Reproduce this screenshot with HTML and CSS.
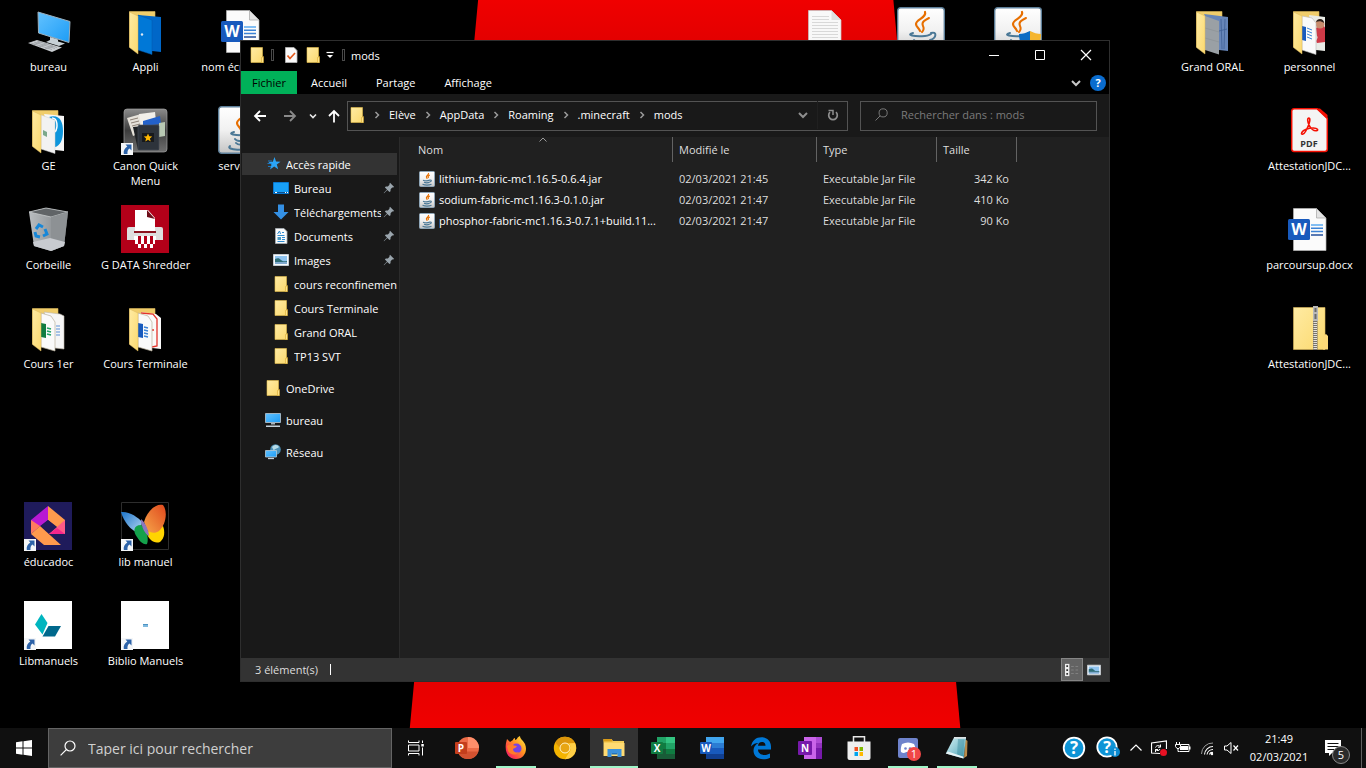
FILE: index.html
```html
<!DOCTYPE html>
<html lang="fr">
<head>
    <meta charset="UTF-8">
    <meta name="viewport" content="width=device-width, initial-scale=1.0">
    <title>mods</title>
    <link rel="stylesheet" href="styles.css">
</head>
<body>

    <!-- Icônes partagées -->
    <svg class="defs" aria-hidden="true">
        <defs>
            <linearGradient id="gFolder" x1="0" y1="0" x2="1" y2="1">
                <stop offset="0" stop-color="#ffeba3"/><stop offset="1" stop-color="#fbd96f"/>
            </linearGradient>
            <linearGradient id="gScreen" x1="0" y1="0" x2="1" y2="1">
                <stop offset="0" stop-color="#63c2ff"/><stop offset="1" stop-color="#1c9cf6"/>
            </linearGradient>
            <linearGradient id="gJar" x1="0" y1="0" x2="0" y2="1">
                <stop offset="0" stop-color="#ffffff"/><stop offset=".5" stop-color="#f1f1f1"/><stop offset="1" stop-color="#c4c4c4"/>
            </linearGradient>
            <linearGradient id="gBin" x1="0" y1="0" x2="1" y2="0">
                <stop offset="0" stop-color="#b9bdc0"/><stop offset=".5" stop-color="#9a9ea1"/><stop offset="1" stop-color="#74787b"/>
            </linearGradient>
            <linearGradient id="gCanon" x1="0" y1="0" x2="0" y2="1">
                <stop offset="0" stop-color="#8b8b8b"/><stop offset=".5" stop-color="#3d3d3d"/><stop offset="1" stop-color="#6f6f6f"/>
            </linearGradient>
            <linearGradient id="gFox" x1="1" y1="0" x2="0" y2="1">
                <stop offset="0" stop-color="#fff04a"/><stop offset=".4" stop-color="#ff9a1f"/><stop offset=".75" stop-color="#ff3b4b"/><stop offset="1" stop-color="#e3157a"/>
            </linearGradient>
            <linearGradient id="gPad" x1="0" y1="0" x2="1" y2="1">
                <stop offset="0" stop-color="#d8f2f6"/><stop offset="1" stop-color="#4aa3b5"/>
            </linearGradient>
            <linearGradient id="gOrange" x1="0" y1="1" x2="1" y2="0">
                <stop offset="0" stop-color="#f6a64a"/><stop offset="1" stop-color="#e0481d"/>
            </linearGradient>
            <linearGradient id="gWing" x1="0" y1="0" x2="1" y2="1">
                <stop offset="0" stop-color="#1b74c9"/><stop offset="1" stop-color="#b9d9f4"/>
            </linearGradient>
        </defs>

        <symbol id="folder" viewBox="0 0 16 16">
            <path d="M2 .5h11.500v15H2z" fill="url(#gFolder)" stroke="#e6bf4e" stroke-width=".6"/>
            <path d="M12.500 10.500l2-1v6.200h-2z" fill="#fde28b" stroke="#d9a92b" stroke-width=".6"/>
        </symbol>
        <symbol id="folder-back" viewBox="0 0 48 48">
            <path d="M8.500 4.500H34V40H8.500z" fill="#f0cd6b" stroke="#dcb95c" stroke-width=".6"/>
        </symbol>
        <symbol id="folder-front" viewBox="0 0 48 48">
            <path d="M8.500 5l8.500 4v38l-8.500-6.500z" fill="url(#gFolder)" stroke="#dcb95c" stroke-width=".5"/>
        </symbol>
        <symbol id="shortcut" viewBox="0 0 12 12">
            <path d="M0 0h12v12H0z" fill="#f4f6f8"/>
            <path d="M4.500 1.500H10.500V7.500L8.600 5.600C7 6.500 6.200 8 6.500 11H2.800C2.300 8 3.500 5 6.300 3.400z" fill="#2c62a8"/>
        </symbol>
        <symbol id="jar" viewBox="0 0 48 48">
            <rect x=".7" y=".7" width="46.600" height="46.600" rx="3" fill="url(#gJar)" stroke="#5d7f99" stroke-width="1.400"/>
            <g fill="none" stroke-linecap="round">
                <path d="M28 5c2 6-9 7-9 12 0 3 3 4 4 7" stroke="#e76f00" stroke-width="2.200"/>
                <path d="M32 11c-4 2-8 4-6 8 1 2 1 4-1 6" stroke="#e76f00" stroke-width="2"/>
                <path d="M16 26c-8 2 2 3.500 9 3.200 6-.2 8-1.500 9-2.200" stroke="#4b7896" stroke-width="2"/>
                <path d="M34 26c6-2 6 5-1 7" stroke="#4b7896" stroke-width="2"/>
                <path d="M17 33c2 3 11 2.500 14 1M18 37c2 2.500 8 2 11 1M12 40c-5 4 16 5.500 25 1" stroke="#4b7896" stroke-width="2"/>
            </g>
        </symbol>
        <symbol id="jar-small" viewBox="0 0 16 16">
            <rect x=".5" y=".5" width="15" height="15" rx="1" fill="url(#gJar)" stroke="#8fa6b8"/>
            <path d="M9.500 2c.8 2-3 2.500-2 4.500l.8 1.300M10.800 4c-1.300.7-2.300 1.300-1.300 3" fill="none" stroke="#e76f00" stroke-width="1.200"/>
            <path d="M4 9.200c2 .8 5 .8 7-.2 2-.2 1.500 1.700-.5 2M5 11.300c2 .7 4 .6 5.500 0M3.500 13.300c2.500.9 6.500.9 9 0" fill="none" stroke="#4b7896" stroke-width="1.200"/>
        </symbol>
        <symbol id="docx" viewBox="0 0 48 48">
            <path d="M8.500 3.500h23l9.500 9.500v32.500H8.500z" fill="#fbfbfb" stroke="#b5b5b5" stroke-width=".7"/>
            <path d="M31.500 3.500v9.500H41z" fill="#e4e4e4" stroke="#a5a5a5" stroke-width=".7"/>
            <path d="M26 20h12" stroke="#5aaaf0" stroke-width="1.500"/><path d="M26 23.300h12M26 26.600h12" stroke="#3c83d6" stroke-width="1.500"/><path d="M26 30h12" stroke="#234f9c" stroke-width="1.500"/>
            <rect x="3" y="14" width="22" height="21" rx="1.500" fill="#185abd"/>
            <text x="14" y="30" class="glyph" font-size="16" fill="#fff">W</text>
        </symbol>
        <symbol id="sheet" viewBox="0 0 48 48">
            <path d="M8.500 3.500h23l9.500 9.500v32.500H8.500z" fill="#f8f8f8" stroke="#c5c5c5" stroke-width=".7"/>
            <path d="M31.500 3.500v9.500H41z" fill="#dedede"/>
            <path d="M12 9.500h17M12 12.500h17M12 15.500h26M12 18.500h26M12 21.500h26M12 24.500h26M12 27.500h26M12 30.500h26M12 33.500h26M12 36.500h26" stroke="#cfcfcf" stroke-width=".8"/>
        </symbol>
        <symbol id="pc" viewBox="0 0 16 16">
            <path d="M.5 1.500h15v9H.5z" fill="url(#gScreen)" stroke="#9fb4c2"/>
            <path d="M6 11h4v1.500H6z" fill="#a9b5bd"/><path d="M1 13.500h14v1.500H1z" fill="#c6d2da"/>
        </symbol>
        <symbol id="picture" viewBox="0 0 16 16">
            <path d="M.5 2.500h15v11H.5z" fill="#f7f9fb" stroke="#c3cad0"/>
            <path d="M2 4h12v8H2z" fill="#8fc3ef"/><path d="M2 7c3-1 4-1 6 1s4 1 6 1v1.500H2z" fill="#2f6e77"/><path d="M2 10h12v2H2z" fill="#7fa9cf"/>
        </symbol>
        <symbol id="pin" viewBox="0 0 12 12">
            <path d="M7 .8l4.200 4.200-1.200.6-.8-.1-1.600 1.700-.1 2-1 .9-2.200-2.200L1 11.300l-.3-.3L4 7.600 1.900 5.500l.9-1 2-.1L6.500 2.800 6.400 2z" fill="#9aa5ad"/>
        </symbol>
        <symbol id="lens" viewBox="0 0 16 16">
            <circle cx="10" cy="6" r="5" fill="none" stroke="currentColor" stroke-width="1.200"/>
            <path d="M6.300 9.700L.6 15.400" stroke="currentColor" stroke-width="1.200"/>
        </symbol>
        <symbol id="chevron" viewBox="0 0 6 8">
            <path d="M1.500 1l3 3-3 3" fill="none" stroke="currentColor" stroke-width="1.500"/>
        </symbol>
        <symbol id="down" viewBox="0 0 12 8">
            <path d="M2 2l4 4 4-4" fill="none" stroke="currentColor" stroke-width="2"/>
        </symbol>
    </svg>

    <main class="desktop">
        <div class="wallpaper"></div>

        <a class="icon c1 r1" href="#">
            <svg viewBox="0 0 48 48">
                <path d="M14 5l32 9.500-1 21L14.500 26z" fill="url(#gScreen)" stroke="#9db0bd" stroke-width="1"/>
                <path d="M26 30l8 2.500v2l7 2-6 2.500-13-4 4-2z" fill="#c7d0d6"/>
                <path d="M4 36l9-3 25 7.500-10 4.500z" fill="#c9cdd1"/>
                <path d="M7 36l21 6.500M10 35l21 6.500M13 34l20 6.500M9 38l8-3.500M15 40l8-3.500M21 42l8-3" stroke="#8b9196" stroke-width=".6"/>
            </svg>
            <span>bureau</span>
        </a>
        <a class="icon c2 r1" href="#">
            <svg viewBox="0 0 48 48">
                <use href="#folder-back"/>
                <path d="M17 8l23 2v35l-9-1z" fill="#0067c8"/>
                <path d="M17 8l14 5v34.500L17 43z" fill="#0078d7" stroke="#0058ad" stroke-width=".5"/>
                <circle cx="21" cy="27.500" r="1.200" fill="#dfe9f2"/>
                <use href="#folder-front"/>
            </svg>
            <span>Appli</span>
        </a>
        <a class="icon c3 r1" href="#">
            <svg><use href="#docx"/></svg>
            <span>nom écran.docx</span>
        </a>
        <a class="icon c9 r1" href="#" aria-label="Document texte"><svg><use href="#sheet"/></svg></a>
        <a class="icon c10 r1" href="#" aria-label="Fichier jar"><svg><use href="#jar"/></svg></a>
        <a class="icon c11 r1" href="#" aria-label="Installateur jar">
            <svg viewBox="0 0 48 48">
                <use href="#jar"/>
                <path d="M25 27c4 0 7-1 11-3v20c-8-3-11-9-11-17z" fill="#0b6cc4"/>
                <path d="M47 27c-4 0-7-1-11-3v20c8-3 11-9 11-17z" fill="#f5b52e"/>
            </svg>
        </a>
        <a class="icon c13 r1" href="#">
            <svg viewBox="0 0 48 48">
                <use href="#folder-back"/>
                <path d="M16 7l24 3v34l-9-1z" fill="#6685b8"/>
                <path d="M33 12l1 30M37 12l-1 30M31 24l8-2" stroke="#3f5f94" stroke-width=".8"/>
                <path d="M17 9l14 5v33.500L17 43z" fill="#9aa0a5"/>
                <path d="M17 21l14 4M17 31l14 4" stroke="#8c9297" stroke-width=".7"/>
                <use href="#folder-front"/>
            </svg>
            <span>Grand ORAL</span>
        </a>
        <a class="icon c14 r1" href="#">
            <svg viewBox="0 0 48 48">
                <use href="#folder-back"/>
                <path d="M24 8l16 2v34l-9-1z" fill="#e9ebe6"/>
                <path d="M31 21c3-3 9-3 9 0v14l-8 1c-2-3 2-5 0-7z" fill="#cf3a47"/>
                <circle cx="35" cy="17" r="4.500" fill="#c98d6e"/><path d="M31 15c1-4 8-4 8 1-3-2-5-2-8-1z" fill="#2b211d"/>
                <path d="M17 9l10 2 4 5v31.500L17 43z" fill="#fafafa" stroke="#b9b9b9" stroke-width=".6"/>
                <path d="M17 19l4 1v14l-4-1z" fill="#185abd"/><path d="M22 21l5 2M22 24l5 2M22 27l5 2M22 30l5 2" stroke="#3c83d6"/>
                <use href="#folder-front"/>
            </svg>
            <span>personnel</span>
        </a>

        <a class="icon c1 r2" href="#">
            <svg viewBox="0 0 48 48">
                <use href="#folder-back"/>
                <path d="M20 8l20 2v35l-9-1z" fill="#f6f6f6"/>
                <path d="M25 11c11-3 14 5 14 14s-3 15-8 16V15z" fill="#0d95dc"/>
                <path d="M28 12c6 0 6 10 3 14" fill="none" stroke="#fff" stroke-width="1.500"/>
                <path d="M17 9l14 5v33.500L17 43z" fill="#f2f2f2" stroke="#cfcfcf" stroke-width=".5"/>
                <path d="M19 24l4 2v5l-4-2z" fill="#7ca88c"/>
                <use href="#folder-front"/>
            </svg>
            <span>GE</span>
        </a>
        <a class="icon c2 r2" href="#">
            <svg viewBox="0 0 48 48">
                <rect x="3" y="3" width="43" height="43" rx="3" fill="url(#gCanon)" stroke="#a2a2a2" stroke-width=".7"/>
                <path d="M6 12l14-4 4 17-12 5z" fill="#e6e2da"/><path d="M9 14l8-2M10 17l8-2M11 20l8-2" stroke="#8d8176"/>
                <path d="M18 8l16-2 1 9-15 4z" fill="#f1efe9"/><path d="M22 15l17-5 1 8-18 2z" fill="#2361c9"/>
                <path d="M38 17l6-1v14l-6 1z" fill="#b9c9b4"/>
                <path d="M12 21l22-2 4 2v23H17z" fill="#1e2124"/>
                <rect x="17" y="19" width="21" height="25" rx="1.500" fill="#2d333b" stroke="#4b525c" stroke-width=".6"/>
                <path d="M21 27h12v9H21z" fill="#17191c"/>
                <path d="M27 27.500l1.200 2.800 3 .2-2.300 2 .8 3-2.700-1.700-2.700 1.700.8-3-2.300-2 3-.2z" fill="#ffb800"/>
                <use href="#shortcut" x="0" y="37" width="12" height="12"/>
            </svg>
            <span>Canon Quick Menu</span>
        </a>
        <a class="icon c3 r2" href="#">
            <svg><use href="#jar"/></svg>
            <span>server.jar</span>
        </a>
        <a class="icon c14 r2" href="#">
            <svg viewBox="0 0 48 48">
                <path d="M9 2.700h23l10.300 9.800V43a2.500 2.500 0 0 1-2.500 2.500H9A2.500 2.500 0 0 1 6.700 43V5.200A2.500 2.500 0 0 1 9 2.700z" fill="#f4f4f4" stroke="#f40f02" stroke-width="1.500"/>
                <path d="M31.500 2.500L42.500 13V9L35 2.500z" fill="#f40f02"/>
                <path d="M24 12c-2 0-1.500 4 .3 7.500 1.700 3.300 4 5.500 7 5.300 2.500-.3 1.500-2.800-3-2.800-5 0-10 2-11.500 4.500-1.300 2.500 2 2.500 4-1.500 2-3.800 4.500-9 4-12-.2-.8-.4-1-.8-1z" fill="none" stroke="#f40f02" stroke-width="1.600"/>
                <text x="24" y="41" class="glyph" font-size="9" fill="#333">PDF</text>
            </svg>
            <span>AttestationJDC...</span>
        </a>

        <a class="icon c1 r3" href="#">
            <svg viewBox="0 0 48 48">
                <path d="M5 7l17-4 22 4-4 34-13 5-17-5z" fill="url(#gBin)"/>
                <path d="M5 7l17-4 22 4-17 5z" fill="#606467" stroke="#c6cacc" stroke-width=".8"/>
                <path d="M27 12l17-5-4 34-13 5z" fill="#8d9194"/>
                <path d="M9 37l17-4 15 4-1 4-13 5-17-5z" fill="#c8cbd0"/>
                <g fill="none" stroke="#1787d8" stroke-width="3"><path d="M12 24l3-4 4 2"/><path d="M21 24l2 5-4 2"/><path d="M16 32l-4-1-1-4"/></g>
            </svg>
            <span>Corbeille</span>
        </a>
        <a class="icon c2 r3" href="#">
            <svg viewBox="0 0 48 48">
                <path d="M0 0h48v48H0z" fill="#b30019"/>
                <path d="M8 22h32a2 2 0 0 1 2 2v11H6V24a2 2 0 0 1 2-2z" fill="#dedede"/>
                <path d="M14 5h13l7 8v13H14z" fill="#fff"/><path d="M26 5l8 9-8-2z" fill="#6d0d18"/>
                <path d="M13 26h22v2H13z" fill="#8c1420"/>
                <path d="M13 31h22v4H13z" fill="#fff"/>
                <path d="M17 31h3v4h-3zM23 31h3v4h-3zM29 31h3v4h-3z" fill="#b30019"/>
                <path d="M14 35h3v4h-3zM20 35h3v4h-3zM26 35h3v4h-3zM32 35h2v4h-2zM17 39h3v4h-3zM23 39h3v4h-3zM29 39h3v4h-3z" fill="#fff"/>
            </svg>
            <span>G DATA Shredder</span>
        </a>
        <a class="icon c14 r3" href="#">
            <svg><use href="#docx"/></svg>
            <span>parcoursup.docx</span>
        </a>

        <a class="icon c1 r4" href="#">
            <svg viewBox="0 0 48 48">
                <use href="#folder-back"/>
                <path d="M20 8l16 2 4 2v33l-9-1z" fill="#f6f6f6" stroke="#bdb7aa" stroke-width=".6"/>
                <path d="M32 22h4M32 25h4M32 28h4M32 31h4" stroke="#5b8fd6"/>
                <path d="M17 9l10 3 4 6v29L17 43z" fill="#fafafa" stroke="#b9b09c" stroke-width=".7"/>
                <path d="M17 19l5 1v14l-5-1z" fill="#107c41"/><path d="M23 24l4 1M23 27l4 1M23 30l4 1" stroke="#21a366" stroke-width="1.700"/>
                <use href="#folder-front"/>
            </svg>
            <span>Cours 1er</span>
        </a>
        <a class="icon c2 r4" href="#">
            <svg viewBox="0 0 48 48">
                <use href="#folder-back"/>
                <path d="M20 8l15 2 5 4v31l-9-1z" fill="#fafafa"/>
                <path d="M20 9l12 1 4 5v27l-5 1" fill="none" stroke="#e3342b" stroke-width="1.300"/>
                <circle cx="32" cy="26" r="1" fill="#e3342b"/>
                <path d="M17 9l10 3 4 6v29L17 43z" fill="#fafafa" stroke="#b9b09c" stroke-width=".7"/>
                <path d="M17 19l5 1v14l-5-1z" fill="#185abd"/><path d="M23 23l4 1M23 26l4 1M23 29l4 1M23 32l4 1" stroke="#3c83d6" stroke-width="1.400"/>
                <use href="#folder-front"/>
            </svg>
            <span>Cours Terminale</span>
        </a>
        <a class="icon c14 r4" href="#">
            <svg viewBox="0 0 48 48">
                <path d="M8.500 3.500H40V45.500H8.500z" fill="url(#gFolder)" stroke="#dcb95c" stroke-width=".6"/>
                <path d="M38 32l3-2 2 2v13.500h-5z" fill="#fcd978"/>
                <path d="M28 3h4.500v43H28z" fill="#77736a"/><path d="M30.200 18v28" stroke="#e6e3da" stroke-width="3.600" stroke-dasharray="1 1"/>
                <path d="M28 2h5v15h-5z" fill="#b9b9b9"/><path d="M29.500 4h2v4h-2zM29.500 10h2v5h-2z" fill="#6a6a6a"/>
            </svg>
            <span>AttestationJDC...</span>
        </a>

        <a class="icon c1 r6" href="#">
            <svg viewBox="0 0 48 48">
                <path d="M0 0h48v48H0z" fill="#1f1b5b"/>
                <path d="M24 4v14L7 31V18z" fill="#b819d3"/><path d="M24 4l17 14v13L24 18z" fill="#ff9a4d"/>
                <path d="M7 18l9 6-9 8z" fill="#ff7a5f"/><path d="M41 18v14H25z" fill="#ff5b87"/><path d="M25 32l8-6 8 6z" fill="#f5268b"/>
                <path d="M7 32l9-8 21 19H20z" fill="#ff9a4d"/><path d="M24 18l7 6-7 6-7-6z" fill="#1f1b5b"/>
                <use href="#shortcut" x="0" y="37" width="12" height="12"/>
            </svg>
            <span>éducadoc</span>
        </a>
        <a class="icon c2 r6" href="#">
            <svg viewBox="0 0 48 48">
                <path d="M.5 .5h47v47H.5z" fill="#000" stroke="#2d2d2d"/>
                <path d="M0 10c8-1 17 5 21 10l-2 12C9 28 3 20 0 10z" fill="url(#gWing)"/>
                <path d="M20 23c-8 0-8 7-4 12 3 5 7 8 10 7 2-5 0-14-6-19z" fill="#14a14b"/>
                <path d="M25 30c3 8 8 12 14 10 5-4 5-11 3-16z" fill="#ffd400"/>
                <path d="M23 20C26 9 35 1 42 3c5 6 3 20-4 26-4 3-9 2-12-1z" fill="url(#gOrange)"/>
                <path d="M20 17c4 3 8 12 8 17-4-2-8-9-8-17z" fill="#8d77c0"/>
                <use href="#shortcut" x="0" y="37" width="12" height="12"/>
            </svg>
            <span>lib manuel</span>
        </a>
        <a class="icon c1 r7" href="#">
            <svg viewBox="0 0 48 48">
                <path d="M0 0h48v48H0z" fill="#fff"/>
                <path d="M17.500 13l6 9-5 11.500-7.500-10z" fill="#00b5bf"/><path d="M24.500 25H37l-6 10.500H18.500z" fill="#00688c"/>
                <use href="#shortcut" x="0" y="37" width="12" height="12"/>
            </svg>
            <span>Libmanuels</span>
        </a>
        <a class="icon c2 r7" href="#">
            <svg viewBox="0 0 48 48">
                <path d="M0 0h48v48H0z" fill="#fff"/>
                <path d="M22 23h5v3h-5z" fill="#7fb9de"/><path d="M22 23h5v1h-5z" fill="#4d94c4"/>
                <use href="#shortcut" x="0" y="37" width="12" height="12"/>
            </svg>
            <span>Biblio Manuels</span>
        </a>

        <!-- Fenêtre de l'explorateur -->
        <section class="window">
            <header class="titlebar">
                <svg class="ico16"><use href="#folder"/></svg>
                <span class="sep"></span>
                <button class="quick" aria-label="Propriétés">
                    <svg viewBox="0 0 16 16"><path d="M2.500 .5h8.500l3 3v12H2.500z" fill="#fafafa" stroke="#b8b8b8" stroke-width=".8"/><path d="M4.500 8.500l2.500 3 5-5.500" fill="none" stroke="#e3591c" stroke-width="1.700"/></svg>
                </button>
                <button class="quick" aria-label="Nouveau dossier"><svg><use href="#folder"/></svg></button>
                <button class="quick-more" aria-label="Personnaliser">
                    <svg viewBox="0 0 8 8"><path d="M.5 1.500h7" stroke="#fff" stroke-width="1.200"/><path d="M1 4h6L4 7z" fill="#fff"/></svg>
                </button>
                <span class="sep"></span>
                <h1>mods</h1>
                <div class="win-buttons">
                    <button aria-label="Réduire"><svg viewBox="0 0 12 12"><path d="M1 6.500h10" stroke="#fff"/></svg></button>
                    <button aria-label="Agrandir"><svg viewBox="0 0 12 12"><path d="M1.500 1.500h9v9h-9z" fill="none" stroke="#fff"/></svg></button>
                    <button aria-label="Fermer"><svg viewBox="0 0 12 12"><path d="M1 1l10 10M11 1L1 11" stroke="#fff" stroke-width="1.200"/></svg></button>
                </div>
            </header>

            <nav class="tabs">
                <button class="file">Fichier</button>
                <button>Accueil</button>
                <button>Partage</button>
                <button>Affichage</button>
                <div class="ribbon-tools">
                    <button aria-label="Développer le ruban"><svg class="arrow-down"><use href="#down"/></svg></button>
                    <button aria-label="Aide"><svg viewBox="0 0 16 16"><circle cx="8" cy="8" r="8" fill="#0a6cce"/><text x="8" y="12" class="glyph" font-size="11" fill="#fff">?</text></svg></button>
                </div>
            </nav>

            <div class="toolbar">
                <button class="nav-btn" aria-label="Précédent"><svg viewBox="0 0 14 14"><path d="M13 7H2M7 2L2 7l5 5" fill="none" stroke="#fff" stroke-width="1.800"/></svg></button>
                <button class="nav-btn" aria-label="Suivant"><svg viewBox="0 0 14 14"><path d="M1 7h11M7 2l5 5-5 5" fill="none" stroke="#8a8a8a" stroke-width="1.800"/></svg></button>
                <button class="nav-small" aria-label="Emplacements récents"><svg viewBox="0 0 8 8"><path d="M1 2.500l3 3 3-3" fill="none" stroke="#e8e8e8" stroke-width="1.600"/></svg></button>
                <button class="nav-btn nav-up" aria-label="Dossier parent"><svg viewBox="0 0 14 14"><path d="M7 13.500V2M2 7l5-5 5 5" fill="none" stroke="#fff" stroke-width="1.800"/></svg></button>
                <div class="address">
                    <svg class="ico16"><use href="#folder"/></svg>
                    <svg class="crumb-sep"><use href="#chevron"/></svg><a href="#">Elève</a>
                    <svg class="crumb-sep"><use href="#chevron"/></svg><a href="#">AppData</a>
                    <svg class="crumb-sep"><use href="#chevron"/></svg><a href="#">Roaming</a>
                    <svg class="crumb-sep"><use href="#chevron"/></svg><a href="#">.minecraft</a>
                    <svg class="crumb-sep"><use href="#chevron"/></svg><a href="#">mods</a>
                    <button class="history" aria-label="Historique"><svg class="arrow-down"><use href="#down"/></svg></button>
                    <button class="refresh" aria-label="Actualiser">
                        <svg viewBox="0 0 12 12"><path d="M3 3.200A4.300 4.300 0 1 0 9 3.200" fill="none" stroke="#8f8f8f" stroke-width="1.700"/><path d="M1.500 1.500h4.500v4.500" fill="none" stroke="#8f8f8f" stroke-width="1.500"/></svg>
                    </button>
                </div>
                <label class="search">
                    <svg><use href="#lens"/></svg>
                    <input type="text" placeholder="Rechercher dans : mods" aria-label="Rechercher dans : mods">
                </label>
            </div>

            <div class="body">
                <aside class="sidebar">
                    <ul>
                        <li class="top selected"><a href="#"><svg viewBox="0 0 16 16"><path d="M9.500 1l1.500 4.500 4.500.2-3.700 2.900 1.400 4.700-4-2.700L5 13.500l1.500-4.700L3.500 6l4.300-.3z" fill="#2ba5f7"/><path d="M3 5h4M2.500 7.500h4M3 10.500h3" stroke="#1a7fd0" stroke-width=".9"/></svg><span>Accès rapide</span></a></li>
                        <li><a href="#"><svg viewBox="0 0 16 16"><path d="M.5 2.500h15v11H.5z" fill="#18a0f8" stroke="#0a78d0"/><path d="M1 12.500h14" stroke="#0b4f8e"/><path d="M2 12.500h2M12 12.500h1M14 12.500h1" stroke="#fff"/></svg><span>Bureau</span><svg class="pin"><use href="#pin"/></svg></a></li>
                        <li><a href="#"><svg viewBox="0 0 16 16"><path d="M5 .5h6v7.500h4.500L8 15.500.5 8H5z" fill="#3490e4"/></svg><span>Téléchargements</span><svg class="pin"><use href="#pin"/></svg></a></li>
                        <li><a href="#"><svg viewBox="0 0 16 16"><path d="M2.500 .5h8.500l3 3v12H2.500z" fill="#fafafa" stroke="#a8b0b6" stroke-width=".8"/><path d="M4.500 6l2-3 1 3M9 4.500h2M4.500 7.500h7M9 9.500h3M9 11.500h3M4.500 13.500h7" fill="none" stroke="#2f8bd0"/><path d="M4.500 9h3.500v3H4.500z" fill="#4c9ac2"/></svg><span>Documents</span><svg class="pin"><use href="#pin"/></svg></a></li>
                        <li><a href="#"><svg><use href="#picture"/></svg><span>Images</span><svg class="pin"><use href="#pin"/></svg></a></li>
                        <li><a href="#"><svg><use href="#folder"/></svg><span>cours reconfinement</span></a></li>
                        <li><a href="#"><svg><use href="#folder"/></svg><span>Cours Terminale</span></a></li>
                        <li><a href="#"><svg><use href="#folder"/></svg><span>Grand ORAL</span></a></li>
                        <li><a href="#"><svg><use href="#folder"/></svg><span>TP13 SVT</span></a></li>
                        <li class="top gap"><a href="#"><svg><use href="#folder"/></svg><span>OneDrive</span></a></li>
                        <li class="top gap"><a href="#"><svg><use href="#pc"/></svg><span>bureau</span></a></li>
                        <li class="top gap"><a href="#"><svg viewBox="0 0 16 16"><circle cx="10.500" cy="5.500" r="5.300" fill="#4b8fb5"/><path d="M7 3c3-3 6-2 7 0-1 2-5 1-5 4z" fill="#b5dbe8"/><path d="M.5 6.500h11v6.500H.5z" fill="url(#gScreen)" stroke="#b8cad6" stroke-width=".8"/><path d="M3 14.500h6" stroke="#c6d2da" stroke-width="1.300"/></svg><span>Réseau</span></a></li>
                    </ul>
                </aside>

                <div class="files">
                    <svg class="sort" viewBox="0 0 8 5"><path d="M.5 4.500L4 1l3.500 3.500" fill="none" stroke="#9a9a9a"/></svg>
                    <table>
                        <colgroup><col class="col-name"><col class="col-date"><col class="col-type"><col class="col-size"><col></colgroup>
                        <thead>
                            <tr><th>Nom</th><th>Modifié le</th><th>Type</th><th>Taille</th><th class="rest"></th></tr>
                        </thead>
                        <tbody>
                            <tr><td><a href="#"><svg><use href="#jar-small"/></svg><span>lithium-fabric-mc1.16.5-0.6.4.jar</span></a></td><td>02/03/2021 21:45</td><td>Executable Jar File</td><td>342 Ko</td><td></td></tr>
                            <tr><td><a href="#"><svg><use href="#jar-small"/></svg><span>sodium-fabric-mc1.16.3-0.1.0.jar</span></a></td><td>02/03/2021 21:47</td><td>Executable Jar File</td><td>410 Ko</td><td></td></tr>
                            <tr><td><a href="#"><svg><use href="#jar-small"/></svg><span>phosphor-fabric-mc1.16.3-0.7.1+build.11...</span></a></td><td>02/03/2021 21:47</td><td>Executable Jar File</td><td>90 Ko</td><td></td></tr>
                        </tbody>
                    </table>
                </div>
            </div>

            <footer class="status">
                <span>3 élément(s)</span>
                <span class="caret"></span>
                <div class="views">
                    <button class="on" aria-label="Détails">
                        <svg viewBox="0 0 16 14"><path d="M0 0h5v14H0z" fill="#eee"/><path d="M1.500 1.500h2v2h-2zM1.500 6h2v2h-2zM1.500 10.500h2v2h-2z" fill="#333"/><path d="M7 3h3M12 3h3M7 7h3M12 7h3M7 11h3M12 11h3" stroke="#858585"/></svg>
                    </button>
                    <button aria-label="Grandes icônes"><svg viewBox="0 0 16 16"><use href="#picture"/></svg></button>
                </div>
            </footer>
        </section>
    </main>

    <footer class="taskbar">
        <button class="start" aria-label="Démarrer">
            <svg viewBox="0 0 16 16"><path d="M0 2.200l6.500-.9v6.200H0zM7.500 1.200L16 0v7.500H7.500zM0 8.500h6.500v6.200L0 13.800zM7.500 8.500H16V16l-8.500-1.200z" fill="#fff"/></svg>
        </button>
        <label class="task-search">
            <svg><use href="#lens"/></svg>
            <input type="text" placeholder="Taper ici pour rechercher" aria-label="Taper ici pour rechercher">
        </label>
        <button class="taskview" aria-label="Affichage des tâches">
            <svg viewBox="0 0 16 16"><path d="M.5 5h10.500v6H.5zM.5 .5v2H11V.5M.5 15.500v-2H11v2M14.500 .5v2.500M14.500 7.500v8" fill="none" stroke="#fff"/><path d="M13.300 4h2.500v2.500h-2.500z" fill="#fff"/></svg>
        </button>
        <div class="apps">
            <button aria-label="PowerPoint">
                <svg viewBox="0 0 24 24"><circle cx="13" cy="12" r="11" fill="#ed6c47"/><path d="M13 1a11 11 0 0 1 11 11H13z" fill="#ff8f6b"/><path d="M2.600 15.500h20.800A11 11 0 0 1 2.600 15.500z" fill="#d35230"/><rect x="0" y="6" width="12" height="12" rx="1" fill="#c43e1c"/><text x="6" y="15.500" class="glyph" font-size="10" fill="#fff">P</text></svg>
            </button>
            <button class="open" aria-label="Firefox">
                <svg viewBox="0 0 24 24"><path d="M2 7l1-4 3 3 3-2c0-1 1-2 2-2l0 2 2-1c0-1 1-2 3-3 0 3 3 4 5 8 3 7-1 15-9 15S.500 16 2 7z" fill="url(#gFox)"/><circle cx="12.500" cy="12.500" r="5" fill="#7542e5"/><path d="M3 10c2-2 5-2 7-.5l3 .5c-1 2-3 2-4 3 0 3 3 4 6 3-3 4-9 3-11-1z" fill="#ff7b2b"/></svg>
            </button>
            <button aria-label="Chrome Canary">
                <svg viewBox="0 0 24 24"><circle cx="12" cy="12" r="11.200" fill="#f4b400"/><path d="M2.200 6.500A11.200 11.200 0 0 1 22 7H12a5 5 0 0 0-5 5z" fill="#dc950b"/><path d="M22 7a11.200 11.200 0 0 1-10 16.200l5-8.200a5 5 0 0 0-2-7.500z" fill="#ffcf47"/><circle cx="12" cy="12" r="5" fill="#e8a613" stroke="#fff2c9" stroke-width="1"/></svg>
            </button>
            <button class="open active" aria-label="Explorateur de fichiers">
                <svg viewBox="0 0 24 24"><path d="M1.500 3h8l1.500 2H22v15H1.500z" fill="#f6ce59"/><path d="M1.500 3h8l1 2.500h-9z" fill="#d99a17"/><path d="M2 7h20.500v13H2z" fill="#ffdb73"/><path d="M5.500 13h14v8h-4v-4h-6v4h-4z" fill="#3b91db"/><path d="M9.500 17h6v1.500h-6z" fill="#2472b9"/></svg>
            </button>
            <button aria-label="Excel">
                <svg viewBox="0 0 24 24"><path d="M6 1h9v6H6z" fill="#21a366"/><path d="M15 1h9v6h-9z" fill="#33c481"/><path d="M6 7h9v6H6z" fill="#107c41"/><path d="M15 7h9v6h-9z" fill="#21a366"/><path d="M6 13h18v10H6z" fill="#185c37"/><path d="M15 13h9v5h-9z" fill="#107c41"/><rect x="0" y="6" width="12" height="12" rx="1" fill="#107c41"/><text x="6" y="15.500" class="glyph" font-size="10" fill="#fff">X</text></svg>
            </button>
            <button aria-label="Word">
                <svg viewBox="0 0 24 24"><path d="M6 1h18v6H6z" fill="#41a5ee"/><path d="M6 7h18v5H6z" fill="#2b7cd3"/><path d="M6 12h18v6H6z" fill="#185abd"/><path d="M6 18h18v5H6z" fill="#103f91"/><rect x="0" y="6" width="12" height="12" rx="1" fill="#185abd"/><text x="6" y="15.500" class="glyph" font-size="10" fill="#fff">W</text></svg>
            </button>
            <button aria-label="Edge">
                <svg viewBox="0 0 24 24"><path d="M2 10.500C3 4.500 7 1.200 12.500 1.200c6 0 9.500 4.500 9.500 9.300v3H9c0 4 3.500 5.500 6.500 5.500 2 0 4-.6 5.500-1.500v4.200c-2 1-4.200 1.500-6.800 1.500-6 0-9.700-3.700-9.700-8.700 0-3.500 2-6.300 5-7.500C6.500 7 4 8 2 10.500zM9 9.800h7.500C16.500 7.500 15.500 6 13 6S9.200 7.700 9 9.800z" fill="#0078d7"/></svg>
            </button>
            <button aria-label="OneNote">
                <svg viewBox="0 0 24 24"><path d="M6 1h18v22H6z" fill="#ca64ea"/><path d="M18 1h6v6h-6z" fill="#ae4bd5"/><path d="M18 7h6v5h-6z" fill="#9332bf"/><path d="M18 12h6v11h-6z" fill="#7719aa"/><rect x="0" y="5" width="14" height="14" rx="1" fill="#7719aa"/><text x="7" y="15.500" class="glyph" font-size="10" fill="#fff">N</text></svg>
            </button>
            <button aria-label="Microsoft Store">
                <svg viewBox="0 0 24 24"><path d="M6.500 6V.8h11V6" fill="none" stroke="#e8e8e8" stroke-width="1.500"/><path d="M.5 5.500h23V22a2 2 0 0 1-2 2h-19a2 2 0 0 1-2-2z" fill="#efefef"/><path d="M7.500 11H11v4H7.500z" fill="#f25022"/><path d="M12.500 11H16v4h-3.500z" fill="#7fba00"/><path d="M7.500 16H11v4H7.500z" fill="#00a4ef"/><path d="M12.500 16H16v4h-3.500z" fill="#ffb900"/></svg>
            </button>
            <button class="open" aria-label="Discord">
                <svg viewBox="0 0 24 24"><rect x="2" y="2" width="20" height="20" rx="2" fill="#6f83cc"/><path d="M6 8c4-2 8-2 12 0 1.500 3 1.500 5 1 8-3 2-4 0-4 0h-5s-2 2-5 0c-.5-3 0-5 1-8z" fill="#fff"/><circle cx="9.500" cy="12.500" r="1.300" fill="#6f83cc"/><circle cx="14" cy="12.500" r="1.300" fill="#6f83cc"/></svg>
                <span class="badge">1</span>
            </button>
            <button class="open" aria-label="Bloc-notes">
                <svg viewBox="0 0 24 24"><path d="M20 3l2.500 2-.5 15-3 2z" fill="#b88a4a"/><path d="M9 1.500l12 .5-2.500 20.500L.800 17.500z" fill="url(#gPad)"/><path d="M13 3l6.500.5-1.500 17-6-2z" fill="#2d8296" opacity=".4"/><path d="M9 1h12v1.700H9z" fill="#dce3e5"/><path d="M.8 17.500l17.700 5v-1.700L3 15.500z" fill="#e9f4f6"/></svg>
            </button>
        </div>

        <div class="tray">
            <button class="help" aria-label="Assistance"><svg viewBox="0 0 24 24"><circle cx="12" cy="12" r="10.300" fill="#0e94d6" stroke="#fff" stroke-width="1.800"/><text x="12" y="18" class="glyph" font-size="17" fill="#fff">?</text></svg></button>
            <button class="help" aria-label="Informations"><svg viewBox="0 0 24 24"><circle cx="11" cy="11" r="9.700" fill="#0e94d6" stroke="#fff" stroke-width="1.800"/><text x="11" y="17" class="glyph" font-size="16" fill="#fff">?</text><circle cx="19" cy="16" r="5" fill="#0b8bd0"/><path d="M19 12.500v1.500M19 15v4.500" stroke="#fff" stroke-width="1.300"/></svg></button>
            <button class="more" aria-label="Icônes masquées"><svg viewBox="0 0 12 12"><path d="M.500 8.500L6 3l5.500 5.500" fill="none" stroke="#fff" stroke-width="1.200"/></svg></button>
            <button aria-label="Mise à jour"><svg viewBox="0 0 16 16"><path d="M9 13.500L.5 13V3L15.500 1v8" fill="none" stroke="#fff" stroke-width="1.200"/><path d="M4.500 7.500c1-2.500 4-2.500 5-.5M9.500 4.500v2.700H7M9 9c-.7 2-3 2-4.500.5M4.500 12V9.500H7" fill="none" stroke="#fff"/><circle cx="12.500" cy="12.500" r="3.500" fill="#e81123"/></svg></button>
            <button aria-label="Batterie"><svg viewBox="0 0 16 16"><path d="M5.500 4.500H14v7H4.500" fill="none" stroke="#fff"/><path d="M14 6.500h1.500v3H14z" fill="#fff"/><path d="M5 6h8v4H5z" fill="#fff"/><path d="M.5 4.500h5v2l-1.500 2H2L.5 6.500zM3 8.500v3h1.500M1.500 2v2M4.500 2v2" fill="#101010" stroke="#fff"/></svg></button>
            <button aria-label="Wi-Fi"><svg viewBox="0 0 16 16"><g fill="none"><path d="M2.500 14A11 11 0 0 1 14 3" stroke="#9a9a9a"/><path d="M5.500 14.500A8.500 8.500 0 0 1 14 6.500M8 14.500a6 6 0 0 1 6-5M10.500 14.500a3 3 0 0 1 3.500-2" stroke="#fff" stroke-width="1.100"/></g><circle cx="13" cy="14" r="1.200" fill="#fff"/></svg></button>
            <button class="sound" aria-label="Son coupé"><svg viewBox="0 0 16 16"><path d="M1.500 6h2.500l4-3.500v11L4 10H1.500z" fill="none" stroke="#fff"/><path d="M10.500 5.500l4.500 5M15 5.500l-4.500 5" stroke="#fff" stroke-width="1.200"/></svg></button>
            <time class="clock" datetime="2021-03-02T21:49">21:49<br>02/03/2021</time>
            <button class="notif" aria-label="Centre de notifications">
                <svg viewBox="0 0 16 16"><path d="M0 0h16v13H7l-3 3v-3H0z" fill="#fff"/><path d="M2.500 3.500h11M2.500 6.500h11M2.500 9.500h7" stroke="#101010"/></svg>
                <span class="count">5</span>
            </button>
            <button class="show-desktop" aria-label="Afficher le bureau"></button>
        </div>
    </footer>

</body>
</html>
```

FILE: styles.css
```css
* {
    margin: 0;
    padding: 0;
    box-sizing: border-box;
}

body {
    display: flex;
    flex-direction: column;
    height: 100vh;
    overflow: hidden;
    background-color: #000;
    color: #fff;
    font-family: "Open Sans", "Noto Sans", sans-serif;
    font-size: 11px;
    line-height: 15px;
}

a {
    color: inherit;
    text-decoration: none;
}

button {
    display: flex;
    align-items: center;
    justify-content: center;
    background: none;
    border: none;
    color: inherit;
    font: inherit;
}

input {
    flex: 1;
    min-width: 0;
    background: none;
    border: none;
    outline: none;
    color: inherit;
    font: inherit;
}

input::placeholder {
    color: inherit;
    opacity: 1;
}

svg {
    display: block;
    flex-shrink: 0;
}

.defs {
    position: absolute;
    width: 0;
    height: 0;
}

.glyph {
    font-family: "Open Sans", sans-serif;
    font-weight: bold;
    text-anchor: middle;
}

.ico16 {
    width: 16px;
    height: 16px;
}

.arrow-down {
    width: 12px;
    height: 8px;
}

/* Bureau */
.desktop {
    position: relative;
    flex: 1;
    display: grid;
    grid-template-columns: repeat(14, 97px);
    grid-template-rows: repeat(7, 99px);
    min-height: 0;
}

.wallpaper {
    position: absolute;
    inset: 0;
    background: linear-gradient(#f00000, #e20000 6%, #e40000 92%, #f00000);
    clip-path: polygon(35% 0, 65.4% 0, 70.3% 100%, 30% 100%);
}

.icon {
    position: relative;
    display: flex;
    flex-direction: column;
    align-items: center;
    gap: 4px;
    padding: 7px 3px 0;
    text-align: center;
}

.icon > svg {
    width: 48px;
    height: 48px;
    margin-right: 2px;
    overflow: visible;
}

.icon span {
    max-width: 91px;
    text-shadow: 0 1px 2px #000;
}

.c1 { grid-column: 1; }
.c2 { grid-column: 2; }
.c3 { grid-column: 3; }
.c9 { grid-column: 9; }
.c10 { grid-column: 10; }
.c11 { grid-column: 11; }
.c13 { grid-column: 13; }
.c14 { grid-column: 14; }
.r1 { grid-row: 1; }
.r2 { grid-row: 2; }
.r3 { grid-row: 3; }
.r4 { grid-row: 4; }
.r6 { grid-row: 6; }
.r7 { grid-row: 7; }

/* Fenêtre */
.window {
    position: absolute;
    top: 40px;
    left: 240px;
    width: 870px;
    height: 642px;
    display: flex;
    flex-direction: column;
    background-color: #202020;
    border: 1px solid #2e2e2e;
}

.titlebar {
    display: flex;
    align-items: center;
    height: 30px;
    padding: 0 0 2px 8px;
    background-color: #000;
}

.titlebar .sep {
    width: 3px;
    height: 12px;
    margin: 0 6px;
    border: 1px solid #4a4a4a;
}

.titlebar h1 {
    font-size: 11px;
    font-weight: normal;
}

.quick {
    width: 22px;
}

.quick svg {
    width: 16px;
    height: 16px;
}

.quick-more {
    width: 12px;
}

.quick-more svg {
    width: 8px;
    height: 8px;
}

.win-buttons {
    display: flex;
    height: 100%;
    margin-left: auto;
}

.win-buttons button {
    width: 46px;
}

.win-buttons svg {
    width: 12px;
    height: 12px;
}

.tabs {
    display: flex;
    height: 23px;
    background-color: #000;
}

.tabs > button {
    padding: 0 14px;
}

.tabs > button + button + button {
    margin-left: 1px;
}

.tabs > .file {
    width: 56px;
    padding: 0;
    background-color: #00b159;
    color: #000;
}

.ribbon-tools {
    display: flex;
    gap: 8px;
    margin-left: auto;
    padding-right: 3px;
    color: #c8c8c8;
}

.ribbon-tools button:last-child svg {
    width: 16px;
    height: 16px;
}

.toolbar {
    display: flex;
    align-items: center;
    height: 43px;
    padding: 0 12px 0 4px;
    background-color: #191919;
}

.nav-btn {
    width: 30px;
    height: 30px;
}

.nav-btn svg {
    width: 14px;
    height: 14px;
}

.nav-small {
    width: 16px;
}

.nav-small svg {
    width: 8px;
    height: 8px;
}

.nav-up {
    width: 26px;
}

.address {
    flex: 1;
    display: flex;
    align-items: center;
    height: 30px;
    padding: 0 0 2px 1px;
    border: 1px solid #535353;
}

.address .crumb-sep {
    width: 6px;
    height: 8px;
    margin: 0 9px;
    color: #9a9a9a;
}

.address .history {
    width: 28px;
    margin-left: auto;
    color: #8f8f8f;
}

.address .refresh {
    width: 30px;
    height: 28px;
    border-left: 1px solid #202020;
}

.refresh svg {
    width: 12px;
    height: 12px;
}

.search {
    display: flex;
    align-items: center;
    width: 237px;
    height: 30px;
    margin-left: 12px;
    padding: 0 0 2px 14px;
    gap: 13px;
    border: 1px solid #535353;
    color: #7b7b7b;
}

.search svg {
    width: 13px;
    height: 13px;
}

.body {
    flex: 1;
    display: flex;
    min-height: 0;
}

/* Volet de navigation */
.sidebar {
    width: 159px;
    padding: 16px 2px 0 1px;
    background-color: #191919;
    border-right: 1px solid #2b2b2b;
}

.sidebar ul {
    list-style-type: none;
}

.sidebar a {
    display: flex;
    align-items: center;
    gap: 5px;
    height: 22px;
    margin-bottom: 2px;
    padding-left: 31px;
    white-space: nowrap;
}

.sidebar .top a {
    padding-left: 23px;
}

.sidebar .selected a {
    background-color: #333;
}

.sidebar .gap {
    margin-top: 10px;
}

.sidebar svg {
    width: 16px;
    height: 16px;
}

.sidebar span {
    flex: 1;
    min-width: 0;
    overflow: hidden;
}

.sidebar .pin {
    width: 12px;
    height: 12px;
    margin: 0 2px 0 -3px;
}

/* Liste des fichiers */
.files {
    position: relative;
    flex: 1;
}

.files .sort {
    position: absolute;
    top: 0;
    left: 139px;
    width: 8px;
    height: 5px;
}

.files table {
    width: 100%;
    border-collapse: separate;
    border-spacing: 0;
    table-layout: fixed;
}

.col-name { width: 273px; }
.col-date { width: 144px; }
.col-type { width: 120px; }
.col-size { width: 80px; }

.files th {
    height: 25px;
    padding-left: 6px;
    border-right: 1px solid #636363;
    color: #dedede;
    font-weight: normal;
    text-align: left;
}

.files th:first-child {
    padding-left: 18px;
}

.files th.rest {
    border-right: none;
}

.files thead::after {
    content: "";
    display: block;
    height: 6px;
}

.files td {
    height: 21px;
    padding-left: 6px;
    color: #dedede;
    white-space: nowrap;
}

.files td:first-child {
    padding-left: 19px;
    color: #fff;
}

.files td:nth-child(4) {
    padding-right: 8px;
    text-align: right;
}

.files td a {
    display: flex;
    align-items: center;
    gap: 4px;
}

.files td svg {
    width: 16px;
    height: 16px;
}

.status {
    display: flex;
    align-items: center;
    height: 23px;
    padding-left: 14px;
    background-color: #333;
    color: #dedede;
}

.status .caret {
    width: 1px;
    height: 11px;
    margin-left: 12px;
    background-color: #fff;
}

.views {
    display: flex;
    height: 100%;
    margin-left: auto;
    padding-right: 4px;
}

.views button {
    width: 22px;
    border: 1px solid transparent;
}

.views .on {
    background-color: #636363;
    border-color: #858585;
}

.views svg {
    width: 14px;
    height: 14px;
}

/* Barre des tâches */
.taskbar {
    display: flex;
    height: 40px;
    background-color: #101010;
}

.start,
.taskview {
    width: 48px;
}

.start svg,
.taskview svg {
    width: 16px;
    height: 16px;
}

.task-search {
    display: flex;
    align-items: center;
    gap: 12px;
    width: 344px;
    padding-left: 11px;
    background-color: #3d3d3d;
    border: 1px solid #646464;
    color: #d0d0d0;
    font-size: 14px;
}

.task-search svg {
    width: 16px;
    height: 16px;
    color: #fff;
}

.apps {
    display: flex;
    gap: 1px;
    margin-left: 3px;
}

.apps button {
    position: relative;
    width: 48px;
}

.apps svg {
    width: 24px;
    height: 24px;
}

.apps .open::after {
    content: "";
    position: absolute;
    bottom: 0;
    left: 4px;
    right: 4px;
    height: 2px;
    background-color: #a0f5c8;
}

.apps .active {
    background-color: #333;
}

.apps .active::after {
    left: 0;
    right: 0;
}

.badge {
    position: absolute;
    top: 19px;
    left: 23px;
    width: 14px;
    height: 14px;
    border-radius: 50%;
    background-color: #f04747;
    line-height: 14px;
    text-align: center;
}

.tray {
    display: flex;
    align-items: center;
    margin-left: auto;
}

.tray button {
    width: 24px;
    height: 40px;
}

.tray button svg {
    width: 16px;
    height: 16px;
}

.tray .help {
    width: 34px;
}

.tray .help svg {
    width: 24px;
    height: 24px;
}

.tray .more {
    width: 22px;
}

.tray .more svg {
    width: 12px;
    height: 12px;
}

.clock {
    width: 72px;
    line-height: 18px;
    text-align: center;
}

.tray .notif {
    position: relative;
    width: 46px;
    padding-right: 10px;
}

.count {
    position: absolute;
    top: 18px;
    left: 17px;
    width: 18px;
    height: 18px;
    border: 1px solid #8a8a8a;
    border-radius: 50%;
    background-color: #2b2b2b;
    line-height: 16px;
    text-align: center;
}

.tray .show-desktop {
    width: 5px;
    border-left: 1px solid #606060;
}
```
